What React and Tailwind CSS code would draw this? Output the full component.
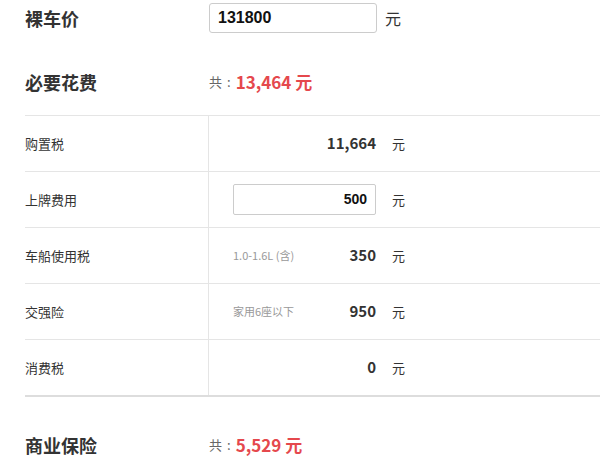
import React from "react";

const F = { fontFamily: '"Microsoft YaHei","Noto Sans CJK SC","Noto Sans",sans-serif' };
const A = { fontFamily: '"Liberation Sans",Arial,"Noto Sans CJK SC",sans-serif' };

function Row({ label, note, value, input, last }) {
  return (
    <div
      className={
        "flex h-[56px] border-t border-[#e5e5e5]" +
        (last ? " border-b-2 border-b-[#dddddd] h-[58px]" : "")
      }
    >
      <div className="w-[183px] flex items-center text-[13px] text-[#333]">{label}</div>
      <div className="flex-1 border-l border-[#e5e5e5] flex items-center">
        {input ? (
          <div
            className="ml-[24px] w-[143px] h-[31px] border border-[#cccccc] rounded-[2px] flex items-center justify-end pr-[8px] text-[14px] font-bold text-[#111]"
            style={A}
          >
            {value}
          </div>
        ) : (
          <div className="ml-[24px] w-[143px] flex items-center justify-between">
            <span className="text-[11px] text-[#999]">{note || ""}</span>
            <span className="text-[15px] font-bold text-[#333]">{value}</span>
          </div>
        )}
        <span className="ml-[16px] text-[13px] text-[#333]">元</span>
      </div>
    </div>
  );
}

function Total({ label, amount, mt }) {
  return (
    <div className={"flex items-center h-[36px] " + mt}>
      <div className="w-[184px] text-[18px] font-bold text-[#333]">{label}</div>
      <span className="text-[13px] text-[#666]">共</span>
      <span className="text-[13px] text-[#666] ml-[5px]">:</span>
      <span className="text-[17px] font-bold text-[#e5484d] ml-[5px]">{amount} 元</span>
    </div>
  );
}

export default function App() {
  return (
    <div className="w-[600px] h-[465px] bg-white overflow-hidden pl-[25px]" style={F}>
      <div className="flex items-center h-[36px]">
        <div className="w-[184px] text-[18px] font-bold text-[#333]">裸车价</div>
        <div
          className="w-[168px] h-[30px] border border-[#cccccc] rounded-[3px] flex items-center pl-[8px] text-[16px] font-bold text-[#111]"
          style={A}
        >
          131800
        </div>
        <span className="ml-[8px] text-[16px] text-[#333]">元</span>
      </div>

      <Total label="必要花费" amount="13,464" mt="mt-[28px]" />

      <div className="mt-[15px]">
        <Row label="购置税" value="11,664" />
        <Row label="上牌费用" value="500" input />
        <Row label="车船使用税" note="1.0-1.6L (含)" value="350" />
        <Row label="交强险" note="家用6座以下" value="950" />
        <Row label="消费税" value="0" last />
      </div>

      <Total label="商业保险" amount="5,529" mt="mt-[30px]" />
    </div>
  );
}
